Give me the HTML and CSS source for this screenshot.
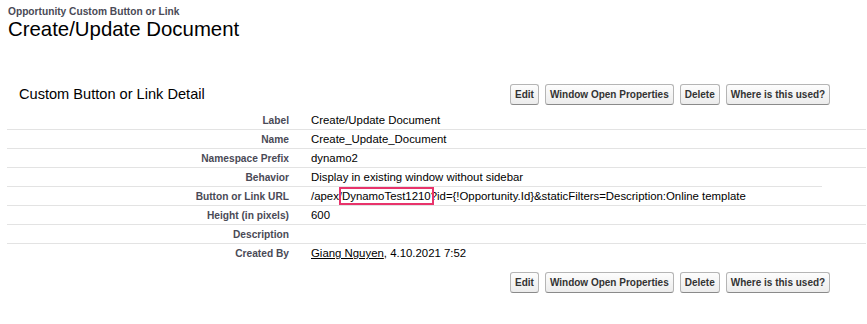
FILE: index.html
```html
<!DOCTYPE html>
<html>
<head>
<meta charset="utf-8">
<link rel="stylesheet" href="styles.css">
</head>
<body>
<div class="page-header">
  <div class="page-type">Opportunity Custom Button or Link</div>
  <h1 class="page-title">Create/Update Document</h1>
</div>
<div class="block">
  <div class="block-head">
    <h2 class="block-title">Custom Button or Link Detail</h2>
    <div class="buttons">
      <button class="btn">Edit</button>
      <button class="btn">Window Open Properties</button>
      <button class="btn">Delete</button>
      <button class="btn">Where is this used?</button>
    </div>
  </div>
  <div class="detail">
    <div class="row"><div class="lbl">Label</div><div class="val">Create/Update Document</div></div>
    <div class="row"><div class="lbl">Name</div><div class="val">Create_Update_Document</div></div>
    <div class="row"><div class="lbl">Namespace Prefix</div><div class="val">dynamo2</div></div>
    <div class="row short"><div class="lbl">Behavior</div><div class="val">Display in existing window without sidebar</div></div>
    <div class="row"><div class="lbl">Button or Link URL</div><div class="val">/apex/<span class="mark">DynamoTest1210</span>?id={!Opportunity.Id}&amp;staticFilters=Description:Online template</div></div>
    <div class="row"><div class="lbl">Height (in pixels)</div><div class="val">600</div></div>
    <div class="row"><div class="lbl">Description</div><div class="val"></div></div>
    <div class="row last"><div class="lbl">Created By</div><div class="val"><a class="user" href="#">Giang Nguyen</a>, 4.10.2021 7:52</div></div>
  </div>
  <div class="block-foot">
    <div class="buttons">
      <button class="btn">Edit</button>
      <button class="btn">Window Open Properties</button>
      <button class="btn">Delete</button>
      <button class="btn">Where is this used?</button>
    </div>
  </div>
</div>
</body>
</html>
```
FILE: styles.css
```css
html, body {
  margin: 0;
  padding: 0;
  background: #fff;
  font-family: "Liberation Sans", Arial, sans-serif;
  color: #000;
}

.page-header {
  padding: 6px 8px 0;
}

.page-type {
  font-size: 10.2px;
  line-height: 12px;
  font-weight: bold;
  color: #4a4a56;
}

.page-title {
  margin: 0;
  font-size: 20.4px;
  line-height: 22px;
  font-weight: normal;
  color: #000;
}

.block {
  margin: 44px 1px 0 7px;
}

.block-head,
.block-foot {
  display: flex;
  align-items: center;
}

.block-head {
  height: 21px;
  margin-bottom: 6px;
}

.block-title {
  margin: 0;
  width: 503px;
  flex: none;
  padding-left: 12px;
  box-sizing: border-box;
  font-size: 14.6px;
  font-weight: normal;
  color: #000;
  line-height: 21px;
}

.block-foot {
  margin-top: 10px;
  padding-left: 503px;
}

.buttons {
  display: flex;
  gap: 6px;
}

.btn {
  height: 21px;
  padding: 0 4px;
  margin: 0;
  border: 1px solid #b5b5b5;
  border-bottom-color: #8a8a8a;
  border-radius: 3px;
  background: linear-gradient(#fdfdfd, #ececec);
  font-family: "Liberation Sans", Arial, sans-serif;
  font-size: 10px;
  font-weight: bold;
  color: #333;
  line-height: 19px;
}

.detail {
  display: flex;
  flex-direction: column;
}

.row {
  display: grid;
  grid-template-columns: 293px 1fr;
  height: 18px;
  align-items: center;
  border-bottom: 1px solid #e3e3e3;
}

.row.short {
  margin-right: 44px;
}

.row.last {
  border-bottom: none;
}

.lbl {
  text-align: right;
  padding-right: 11px;
  font-size: 10.2px;
  font-weight: bold;
  color: #4a4a56;
  white-space: nowrap;
}

.val {
  padding-left: 11px;
  font-size: 11.4px;
  color: #000;
  white-space: nowrap;
}

.mark {
  position: relative;
}

.mark::after {
  content: "";
  position: absolute;
  left: -3px;
  right: -3px;
  top: -3px;
  bottom: -3px;
  border: 2.5px solid #e8336b;
}

.user {
  color: #000;
  text-decoration: underline;
}
```
